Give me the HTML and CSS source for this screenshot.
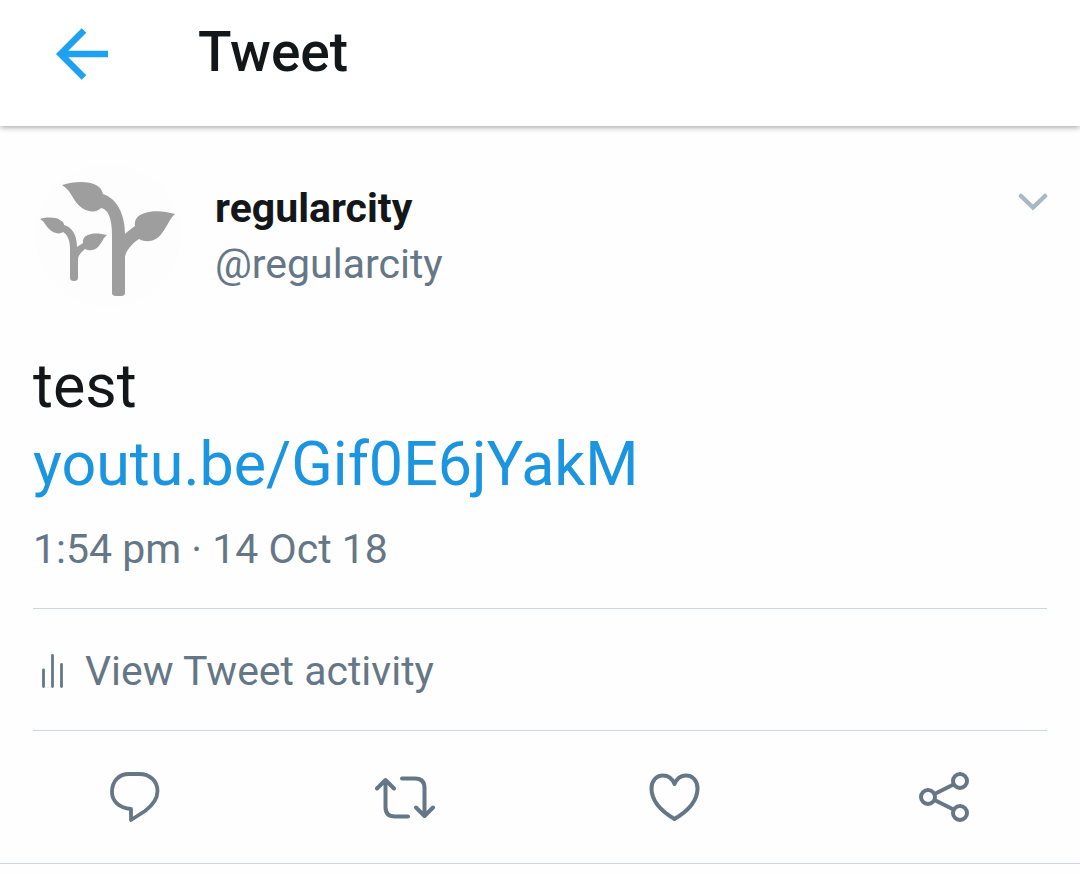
FILE: index.html
```html
<!DOCTYPE html>
<html lang="en">
<head>
<meta charset="utf-8">
<meta name="viewport" content="width=device-width, initial-scale=1">
<title>Tweet</title>
<link rel="stylesheet" href="styles.css">
</head>
<body>
<header class="topbar">
  <button class="icon-button back" type="button" aria-label="Back">
    <svg width="52" height="52" viewBox="0 0 52 52" fill="none" stroke="currentColor" stroke-width="6.500"><path d="M28 2.500 4.500 26 28 49.500M5 26h47"/></svg>
  </button>
  <h1 class="title">Tweet</h1>
</header>
<main>
  <article class="tweet">
    <div class="author">
      <svg class="avatar" viewBox="0 0 144 144" role="img" aria-label="regularcity avatar">
        <circle cx="72" cy="72" r="72" fill="#fdfdfd"/>
        <g fill="#9e9e9e">
          <path d="M26 22C38 18 53 18 60 22C64 24 66 27 67 31C80 35 89 50 89 71C92 68 96 65 99 63C98 56 102 52 109 50C117 47 129 48 139 51C134 55 131 64 126 70C120 79 110 80 103 76C97 80 90 87 89 94V130Q89 133 85 133H80Q76 133 76 130V72C76 55 72 46 65 45C61 50 52 49 46 45C37 39 36 28 26 22Z"/>
          <path d="M4 56C11 54 20 54 24 57C27 59 28 60 28 62C36 64 41 72 41 84Q44 82 47 80C46 75 50 72 55 71C60 70 66 71 71 72C67 75 66 80 62 84C58 88 53 88 49 86Q43 91 42 95V115Q42 118 38 118Q34 118 34 115V85C34 77 31 71 27 69C23 72 17 70 13 66C10 63 8 58 4 56Z"/>
        </g>
      </svg>
      <div class="names">
        <a class="name" href="#profile">regularcity</a>
        <a class="handle" href="#profile">@regularcity</a>
      </div>
      <button class="icon-button more" type="button" aria-label="More options">
        <svg width="30" height="18" viewBox="0 0 30 18" fill="none" stroke="currentColor" stroke-width="4.500" stroke-linecap="round"><path d="M3 3 15 14.500 27 3"/></svg>
      </button>
    </div>
    <p class="text">test<br><a class="link" href="#video">youtu.be/Gif0E6jYakM</a></p>
    <time class="date" datetime="2018-10-14T13:54">1:54 pm · 14 Oct 18</time>
    <a class="activity" href="#activity">
      <svg width="22" height="36" viewBox="0 0 22 36" fill="none" stroke="currentColor" stroke-width="2.800" stroke-linecap="round"><path d="M1.500 17v16.500M10.500 2.500v31M19.500 11.500v22"/></svg>
      View Tweet activity
    </a>
  </article>
  <div class="actions">
    <button class="icon-button" type="button" aria-label="Reply">
      <svg width="60" height="60" viewBox="0 0 60 60" fill="none" stroke="currentColor" stroke-width="3.800" stroke-linejoin="round"><path d="M24 7H34C45 7 52.500 14 52.500 24C52.500 32 48 38 40 44L26 53V42C14 41 7 34 7 25C7 14 14 7 24 7Z"/></svg>
    </button>
    <button class="icon-button" type="button" aria-label="Retweet">
      <svg width="60" height="60" viewBox="0 0 60 60" fill="none" stroke="currentColor" stroke-width="4" stroke-linecap="round" stroke-linejoin="round"><path d="M2 21.500 10.500 13 19 21.500M10.500 14V40Q10.500 49.500 20 49.500H33M27 11.500H40Q49.500 11.500 49.500 21V48M41 40.500 49.500 49 58 40.500"/></svg>
    </button>
    <button class="icon-button" type="button" aria-label="Like">
      <svg width="60" height="60" viewBox="0 0 60 60" fill="none" stroke="currentColor" stroke-width="4" stroke-linejoin="round"><path d="M29.500 17C27 11 23 8.500 18 8.500C11 8.500 6.500 14 6.500 21.500C6.500 34 16 44 29.500 52C43 44 52.500 34 52.500 21.500C52.500 14 48 8.500 41 8.500C36 8.500 32 11 29.500 17Z"/></svg>
    </button>
    <button class="icon-button" type="button" aria-label="Share">
      <svg width="60" height="60" viewBox="0 0 60 60" fill="none" stroke="currentColor" stroke-width="4"><circle cx="13" cy="30" r="7"/><circle cx="45" cy="14" r="7"/><circle cx="45" cy="46" r="7"/><path d="M19.500 27 38.500 17.500M19.500 33 38.500 42.500"/></svg>
    </button>
  </div>
</main>
</body>
</html>
```
FILE: styles.css
```css
* {
  box-sizing: border-box;
}

body {
  margin: 0;
  background: #fefefe;
  color: #14171a;
  font-family: Roboto, "Liberation Sans", sans-serif;
  font-size: 41px;
  line-height: 56px;
}

a {
  color: inherit;
  text-decoration: none;
}

svg {
  display: block;
  flex: none;
}

.icon-button {
  padding: 0;
  border: 0;
  background: none;
  color: inherit;
  cursor: pointer;
}

.topbar {
  display: flex;
  align-items: flex-start;
  gap: 90px;
  padding: 20px 56px 34px;
  background: #fff;
  box-shadow: 0 1px 6px rgba(0, 0, 0, 0.4);
}

.back {
  padding-top: 8px;
  color: #1da1f2;
}

.title {
  margin: 0;
  font-size: 55px;
  font-weight: 500;
  line-height: 64px;
  padding-bottom: 8px;
}

.tweet {
  padding: 37px 33px 0;
}

.author {
  display: flex;
  align-items: center;
  padding-left: 3px;
}

.avatar {
  width: 144px;
  height: 144px;
}

.names {
  display: flex;
  flex: 1;
  flex-direction: column;
  align-items: flex-start;
  padding: 2px 0 0 35px;
}

.name {
  font-weight: 700;
}

.handle,
.date,
.activity,
.actions {
  color: #657786;
}

.more {
  align-self: flex-start;
  padding-top: 30px;
  margin-right: -1px;
  color: #aab8c2;
}

.text {
  margin: 40px 0 18px;
  font-size: 61px;
  line-height: 78px;
}

.link {
  color: #1b95e0;
}

.date {
  display: block;
  padding-bottom: 31px;
}

.activity {
  display: flex;
  align-items: center;
  gap: 21px;
  padding: 34px 9px 31px;
  border-top: 1px solid #ccd6dd;
  border-bottom: 1px solid #ccd6dd;
}

.actions {
  display: grid;
  grid-template-columns: repeat(4, 1fr);
  justify-items: center;
  padding: 36px 0;
  border-bottom: 1px solid #ccd6dd;
}
```
